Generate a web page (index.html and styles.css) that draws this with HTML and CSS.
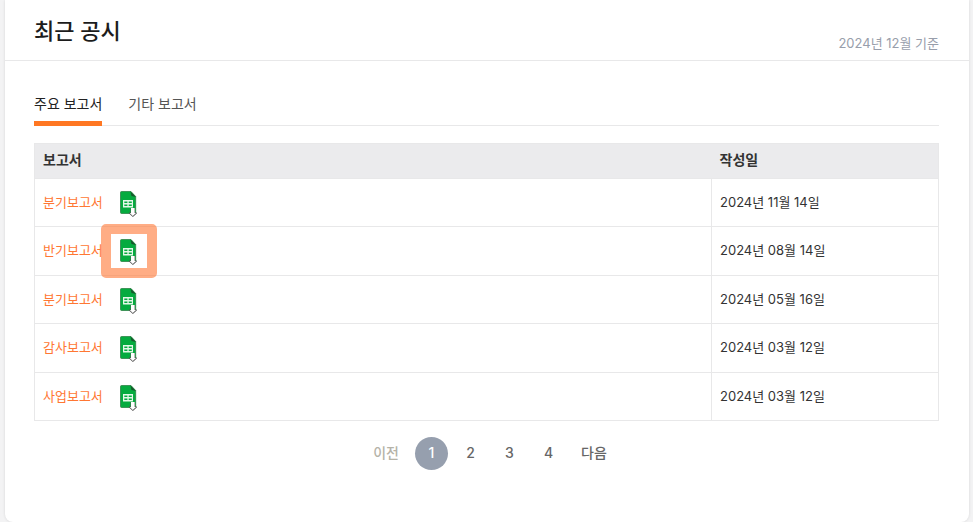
FILE: index.html
```html
<!DOCTYPE html>
<html lang="ko">
  <head>
    <meta charset="UTF-8" />
    <meta name="viewport" content="width=device-width, initial-scale=1.0" />
    <title>최근 공시</title>
    <link rel="stylesheet" href="styles.css">
  </head>
  <body>
    <svg class="sprite" aria-hidden="true">
      <symbol id="icon-sheet" viewBox="0 0 17 26">
        <path d="M1.5 0.5H11L15.7 5.5V22.5H1.5Q0.5 22.5 0.5 21.5V1.5Q0.5 0.5 1.5 0.5Z" fill="#05ab3f" stroke="#23783b" stroke-width="0.7" />
        <path d="M10.5 0.5L16 6L11.5 5Z" fill="#17572b" />
        <path d="M3 9H13V16.5H3Z" fill="#e4f8e9" />
        <path d="M4.3 10.4H7.4V12.1H4.3ZM8.7 10.4H11.8V12.1H8.7ZM4.3 13.4H7.4V15.1H4.3ZM8.7 13.4H11.8V15.1H8.7Z" fill="#05ab3f" />
        <path d="M10.6 17H15V21.4H16.8V22.4L12.9 26L9 22.4V21.4H10.6Z" fill="#555" />
        <path d="M11 17H14.6V22H16L12.8 25L9.8 22H11Z" fill="#fff" />
      </symbol>
    </svg>
    <div class="card">
      <div class="card-header">
        <h2 class="title">최근 공시</h2>
        <span class="base-date">2024년 12월 기준</span>
      </div>
      <div class="card-body">
        <div class="tabs" id="tabs">
          <button type="button" class="tab tab_active">주요 보고서</button>
          <button type="button" class="tab">기타 보고서</button>
        </div>
        <table class="reports">
          <thead>
            <tr>
              <th>보고서</th>
              <th class="col-date">작성일</th>
            </tr>
          </thead>
          <tbody>
            <tr>
              <td>
                <div class="report">
                  <a href="#" class="report-link">분기보고서</a>
                  <a href="#" class="download" aria-label="엑셀 다운로드"><svg><use href="#icon-sheet" /></svg></a>
                </div>
              </td>
              <td>2024년 11월 14일</td>
            </tr>
            <tr>
              <td>
                <div class="report">
                  <a href="#" class="report-link">반기보고서</a>
                  <a href="#" class="download download_marked" aria-label="엑셀 다운로드"><svg><use href="#icon-sheet" /></svg></a>
                </div>
              </td>
              <td>2024년 08월 14일</td>
            </tr>
            <tr>
              <td>
                <div class="report">
                  <a href="#" class="report-link">분기보고서</a>
                  <a href="#" class="download" aria-label="엑셀 다운로드"><svg><use href="#icon-sheet" /></svg></a>
                </div>
              </td>
              <td>2024년 05월 16일</td>
            </tr>
            <tr>
              <td>
                <div class="report">
                  <a href="#" class="report-link">감사보고서</a>
                  <a href="#" class="download" aria-label="엑셀 다운로드"><svg><use href="#icon-sheet" /></svg></a>
                </div>
              </td>
              <td>2024년 03월 12일</td>
            </tr>
            <tr>
              <td>
                <div class="report">
                  <a href="#" class="report-link">사업보고서</a>
                  <a href="#" class="download" aria-label="엑셀 다운로드"><svg><use href="#icon-sheet" /></svg></a>
                </div>
              </td>
              <td>2024년 03월 12일</td>
            </tr>
          </tbody>
        </table>
        <nav class="pagination">
          <button type="button" class="page-move" disabled>이전</button>
          <button type="button" class="page page_active">1</button>
          <button type="button" class="page">2</button>
          <button type="button" class="page">3</button>
          <button type="button" class="page">4</button>
          <button type="button" class="page-move">다음</button>
        </nav>
      </div>
    </div>
  </body>
</html>
```
FILE: styles.css
```css
*,
*::after {
  box-sizing: border-box;
}
body {
  margin: 0;
  padding: 0 4px 0 5px;
  background-color: #f3f3f4;
  color: #333;
  font-family: Inter, "Noto Sans CJK KR", sans-serif;
  font-size: 13px;
  line-height: 20px;
}
a {
  text-decoration: none;
}
button {
  padding: 0;
  border: none;
  background: none;
  color: inherit;
  font: inherit;
  cursor: pointer;
}
.sprite {
  display: none;
}
.card {
  background-color: #fff;
  border-radius: 0 0 8px 8px;
  box-shadow: 0 0 3px rgba(0, 0, 0, 0.12);
}
.card-header {
  display: flex;
  justify-content: space-between;
  align-items: flex-end;
  padding: 15px 30px 7px 29px;
  border-bottom: 1px solid #e8e8e9;
}
.title {
  margin: 0;
  padding-bottom: 6px;
  color: #1c1c1c;
  font-size: 22px;
  font-weight: 500;
  line-height: 32px;
}
.base-date {
  color: #989eab;
}
.card-body {
  padding: 33px 30px 52px 29px;
}
.tabs {
  display: flex;
  column-gap: 26px;
  border-bottom: 1px solid #e8e8e9;
}
.tab {
  margin-bottom: -1px;
  padding-bottom: 7px;
  border-bottom: 5px solid transparent;
  color: #555;
  font-size: 14px;
}
.tab_active {
  border-bottom-color: #ff7722;
  color: #222;
}
.reports {
  width: 100%;
  margin-top: 17px;
  border-collapse: collapse;
  table-layout: fixed;
  border: 1px solid #e8e8e9;
}
.reports th {
  height: 35px;
  padding: 0 8px 2px;
  background-color: #ebebed;
  font-size: 14px;
  font-weight: 600;
  text-align: left;
}
.reports .col-date {
  width: 227px;
}
.reports td {
  height: 48px;
  padding: 0 8px;
  border: 1px solid #e8e8e9;
}
.reports td:last-child {
  padding-bottom: 2px;
}
.reports tr:nth-child(even) td {
  height: 49px;
}
.report {
  display: flex;
  align-items: center;
  column-gap: 17px;
}
.report-link {
  padding-bottom: 2px;
  color: #ff7733;
}
.download {
  position: relative;
  padding-top: 2px;
}
.download svg {
  display: block;
  width: 17px;
  height: 26px;
}
.download_marked::after {
  content: "";
  position: absolute;
  top: -13px;
  left: -19px;
  width: 56px;
  height: 54px;
  border: 10px solid rgba(255, 119, 51, 0.6);
  border-radius: 5px;
}
.pagination {
  display: flex;
  justify-content: center;
  align-items: center;
  column-gap: 6px;
  margin-top: 16px;
  padding-left: 7px;
  color: #666;
  font-size: 14px;
  font-weight: 500;
}
.page {
  width: 33px;
  height: 33px;
  padding-bottom: 1px;
  border-radius: 50%;
}
.page_active {
  background-color: #969fae;
  color: #fff;
}
.page-move {
  margin: 0 10px;
  padding-bottom: 2px;
}
.page-move:disabled {
  color: #b5b3a8;
  cursor: default;
}
```
